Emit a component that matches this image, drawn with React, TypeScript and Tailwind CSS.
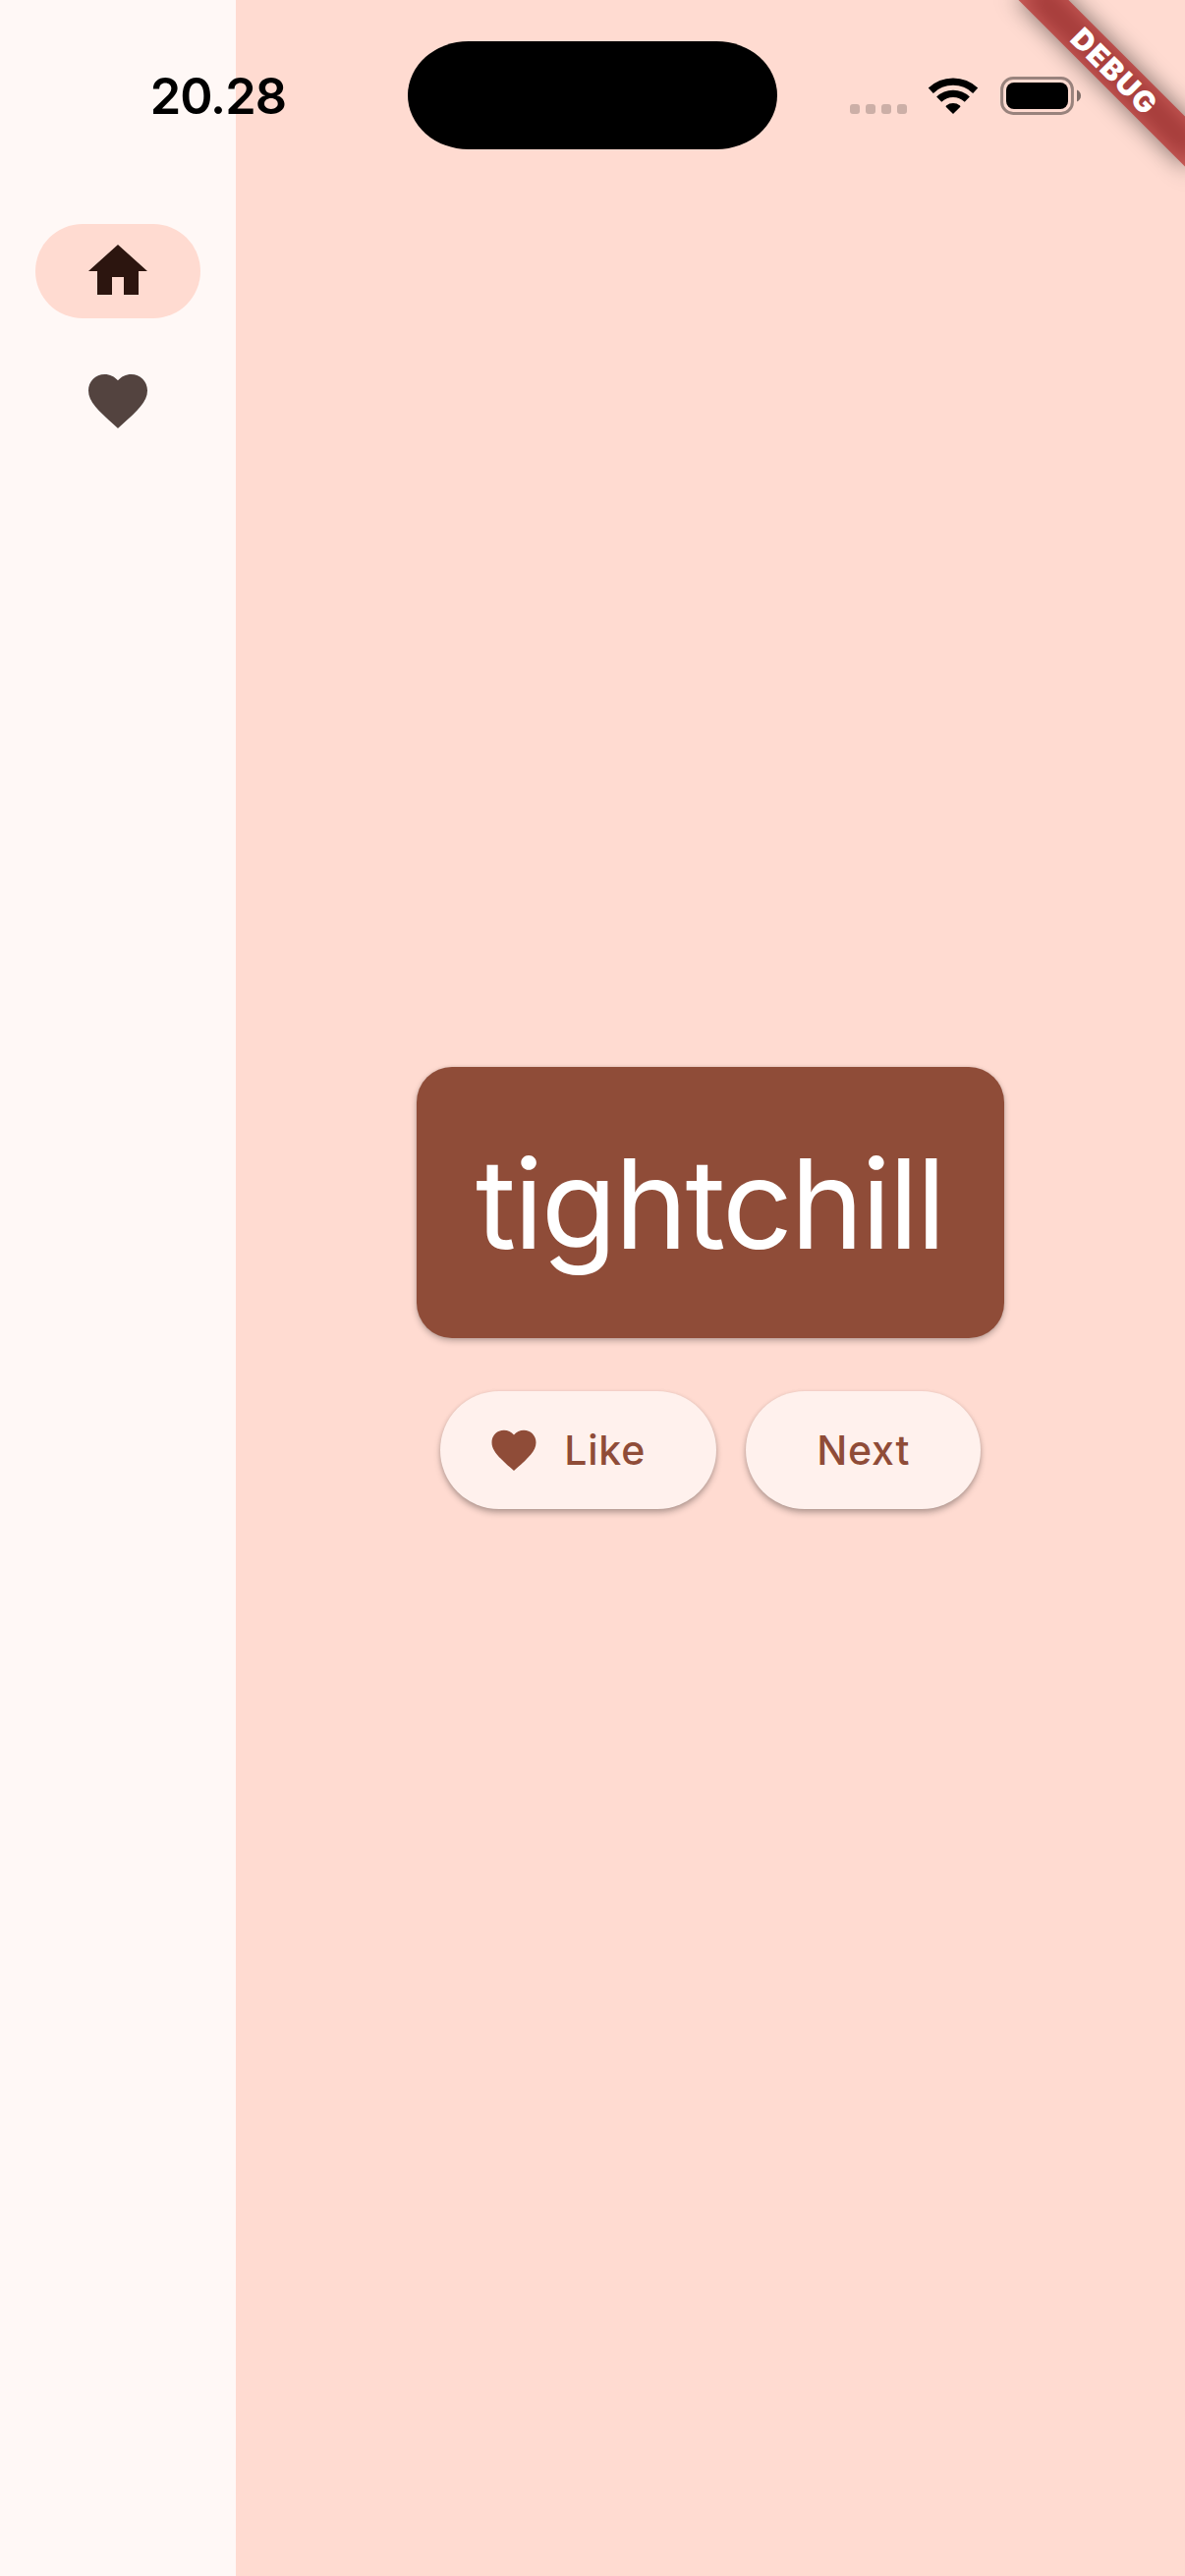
import React from "react";

const HEART =
  "M12 21.35l-1.45-1.32C5.4 15.36 2 12.28 2 8.5 2 5.42 4.42 3 7.5 3c1.74 0 3.41.81 4.5 2.09C13.09 3.81 14.76 3 16.5 3 19.58 3 22 5.42 22 8.5c0 3.78-3.4 6.86-8.55 11.54L12 21.35z";
const HOME = "M10 20v-6h4v6h5v-8h3L12 3 2 12h3v8z";

function Icon({ d, className }: { d: string; className: string }) {
  return (
    <svg viewBox="0 0 24 24" fill="currentColor" className={className} aria-hidden="true">
      <path d={d} />
    </svg>
  );
}

function WifiIcon() {
  return (
    <svg viewBox="0 0 52 40" className="h-[40px] w-[52px]" fill="none" aria-hidden="true">
      <path d="M3.3 14.2A33 33 0 0 1 48.7 14.2" stroke="#000" strokeWidth="7.4" />
      <path d="M11.7 23.1A20.6 20.6 0 0 1 40.3 23.1" stroke="#000" strokeWidth="7.4" />
      <path d="M26 38L18.9 31Q18.2 30.2 19 29.5A11.5 11.5 0 0 1 33 29.5Q33.8 30.2 33.1 31Z" fill="#000" />
    </svg>
  );
}

function BatteryIcon() {
  return (
    <svg viewBox="0 0 84 40" className="h-[40px] w-[84px]" fill="none" aria-hidden="true">
      <rect x="1.6" y="1.6" width="71.8" height="35.8" rx="11.5" stroke="#000" strokeOpacity="0.4" strokeWidth="3" />
      <rect x="6" y="6" width="63" height="27" rx="8" fill="#000" />
      <path d="M78 13.5C80.6 14.6 82 16.8 82 19.5S80.6 24.4 78 25.5Z" fill="#000" fillOpacity="0.5" />
    </svg>
  );
}

function StatusBar() {
  return (
    <header className="absolute inset-x-0 top-0 flex h-[194px] items-start">
      <div className="flex h-[194px] w-[414px] justify-end pr-[123px]">
        <span className="mt-[68px] h-[60px] text-[50.5px] leading-[60px] font-semibold tracking-[-1px] whitespace-nowrap text-black">
          20.28
        </span>
      </div>
      <div className="mt-[41.5px] ml-[0.5px] h-[110.5px] w-[376.5px] shrink-0 rounded-[62px/55.25px] bg-black" />
      <div className="mt-[78px] ml-[74px] flex h-[40px] items-start">
        <div className="mt-[28px] flex gap-[6px]">
          {[0, 1, 2, 3].map((i) => (
            <span key={i} className="size-[10px] rounded-[3px] bg-black/20" />
          ))}
        </div>
        <div className="ml-[21px]">
          <WifiIcon />
        </div>
        <div className="ml-[22px]">
          <BatteryIcon />
        </div>
      </div>
    </header>
  );
}

function DebugBanner() {
  return (
    <div className="absolute top-0 right-0 h-[300px] w-[300px] overflow-hidden">
      <div className="absolute top-[53.75px] left-[108.25px] h-[36px] w-[240px] rotate-45">
        <div className="absolute inset-0 bg-black/50 blur-[12px]" />
        <div className="absolute inset-0 flex items-center justify-center bg-[#b71c1c]/63 pl-[1.4px] text-[29.7px] leading-[36px] font-black tracking-[1.4px] text-white">
          DEBUG
        </div>
      </div>
    </div>
  );
}

export default function App() {
  return (
    <div className="relative flex h-[2622px] w-[1206px] overflow-hidden bg-[#ffdbd1] font-['Inter',sans-serif]">
      <nav className="flex w-[240px] shrink-0 flex-col items-center gap-[36px] bg-[#fff8f6] pt-[228px]">
        <button className="flex h-[96px] w-[168px] items-center justify-center rounded-full bg-[#ffdbd1] text-[#2c150f]">
          <Icon d={HOME} className="size-[72px]" />
        </button>
        <button className="flex h-[96px] w-[168px] items-center justify-center rounded-full text-[#53433f]">
          <Icon d={HEART} className="size-[72px]" />
        </button>
      </nav>
      <main className="flex flex-1 flex-col items-center justify-center gap-[54px]">
        <div className="flex h-[276px] w-[598px] items-center justify-center rounded-[36px] bg-[#8f4c38] pt-[2px] pr-[1.5px] shadow-[0_3px_6px_rgba(0,0,0,0.25),0_0_3px_rgba(0,0,0,0.12)]">
          <span className="text-[126px] leading-[156px] font-normal tracking-[-2.5px] text-white">tightchill</span>
        </div>
        <div className="flex gap-[30px] text-[41px] leading-[60px] font-medium tracking-[0.8px] text-[#8f4c38]">
          <button className="flex h-[120px] w-[281.5px] items-center rounded-full bg-[#fff1ed] pl-[48px] shadow-[0_4px_6px_rgba(0,0,0,0.25),0_1px_4px_rgba(0,0,0,0.1)]">
            <Icon d={HEART} className="size-[54px]" />
            <span className="ml-[24.5px]">Like</span>
          </button>
          <button className="flex h-[120px] w-[239px] items-center justify-center rounded-full bg-[#fff1ed] shadow-[0_4px_6px_rgba(0,0,0,0.25),0_1px_4px_rgba(0,0,0,0.1)]">
            Next
          </button>
        </div>
      </main>
      <StatusBar />
      <DebugBanner />
    </div>
  );
}
